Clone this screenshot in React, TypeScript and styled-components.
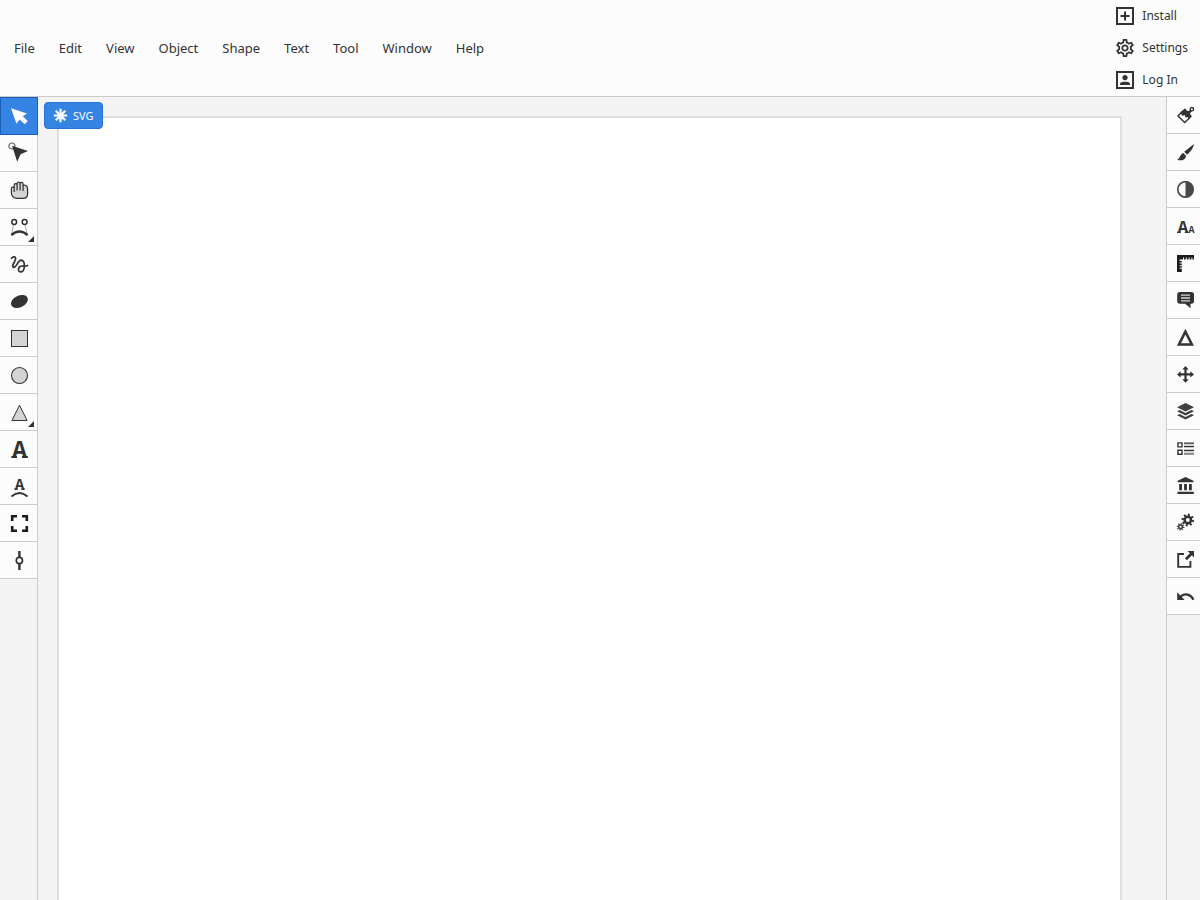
import React from "react";
import styled, { createGlobalStyle, css } from "styled-components";
import { MdOutlineSettings } from "react-icons/md";

const INK = "#333333";
const SHADE = "#d4d4d4";
const LINE = "#cccccc";
const PANEL = "#fcfcfc";
const ACCENT = "#3584e4";
const ACCENT_DARK = "#1b5fb4";

const GlobalStyle = createGlobalStyle`
  *, *::before, *::after { box-sizing: border-box; }
  body {
    margin: 0;
    background: #f4f4f4;
    color: ${INK};
    font-family: "Noto Sans", sans-serif;
    font-size: 13px;
    line-height: 18px;
  }
`;

const Shell = styled.div`
  display: flex;
  flex-direction: column;
  min-height: 100vh;
`;

const Header = styled.header`
  display: flex;
  align-items: center;
  justify-content: space-between;
  background: ${PANEL};
  border-bottom: 1px solid ${LINE};
`;

const MenuBar = styled.nav`
  display: flex;
  flex-wrap: wrap;
  padding-left: 2px;
`;

const MenuButton = styled.button`
  padding: 8px 12px;
  border: 0;
  background: none;
  color: inherit;
  font: inherit;
  cursor: pointer;
  &:hover { background: #ececec; }
`;

const AccountBar = styled.div`
  display: flex;
  flex-direction: column;
`;

const AccountButton = styled.button`
  display: flex;
  align-items: center;
  gap: 8px;
  height: 32px;
  padding: 0 12px;
  border: 0;
  background: none;
  color: inherit;
  font: inherit;
  font-size: 12px;
  cursor: pointer;
  &:hover { background: #ececec; }
`;

const Workspace = styled.main`
  display: flex;
  flex: 1;
`;

const Toolbar = styled.div<{ $side: "left" | "right" }>`
  flex: none;
  ${({ $side }) =>
    $side === "left"
      ? css`
          width: 38px;
          border-right: 1px solid ${LINE};
        `
      : css`
          width: 34px;
          border-left: 1px solid ${LINE};
        `}
`;

const ToolButton = styled.button<{ $active?: boolean }>`
  position: relative;
  display: flex;
  align-items: center;
  justify-content: center;
  width: 100%;
  height: 37px;
  padding: 0 0 0 1px;
  border: 0;
  border-bottom: 1px solid ${LINE};
  background: ${PANEL};
  color: ${INK};
  cursor: pointer;
  ${({ $active }) =>
    $active &&
    css`
      width: 38px;
      height: 38px;
      padding: 0;
      border: 1px solid ${ACCENT_DARK};
      background: ${ACCENT};
      color: #ffffff;
    `}
`;

const PanelButton = styled(ToolButton)`
  padding: 0 0 0 3px;
`;

const Flyout = styled.span`
  position: absolute;
  right: 3px;
  bottom: 3px;
  border-left: 6px solid transparent;
  border-bottom: 6px solid ${INK};
`;

const CanvasArea = styled.section`
  position: relative;
  display: flex;
  flex: 1;
  padding: 19px 44px 0 19px;
`;

const Artboard = styled.div`
  flex: 1;
  background: #ffffff;
  border: 2px solid #dfdfdf;
  border-bottom: 0;
`;

const FormatTab = styled.button`
  position: absolute;
  top: 5px;
  left: 6px;
  display: flex;
  align-items: center;
  gap: 5px;
  height: 27px;
  padding: 0 8px;
  border: 1px solid #2674d4;
  border-radius: 4px;
  background: ${ACCENT};
  color: #ffffff;
  font: inherit;
  font-size: 11px;
  cursor: pointer;
`;

const Icon = styled.svg.attrs({ viewBox: "0 0 18 18", "aria-hidden": true })<{ $size?: number }>`
  display: block;
  flex: none;
  width: ${({ $size = 18 }) => $size}px;
  height: ${({ $size = 18 }) => $size}px;
  overflow: visible;
  fill: currentColor;
`;

const GearIcon = styled(MdOutlineSettings)`
  display: block;
  flex: none;
  width: 18px;
  height: 18px;
`;

const Letter = styled.text<{ $size: number }>`
  font-family: "Liberation Mono", monospace;
  font-size: ${({ $size }) => $size}px;
  font-weight: 700;
  text-anchor: middle;
`;

const line = { fill: "none", stroke: "currentColor" } as const;

// Closed outline of a toothed wheel with a round hole.
function cog(cx: number, cy: number, outer: number, inner: number, hole: number, teeth: number) {
  const step = (Math.PI * 2) / teeth;
  const at = (r: number, a: number) =>
    `${(cx + r * Math.cos(a)).toFixed(2)} ${(cy + r * Math.sin(a)).toFixed(2)}`;
  let d = "";
  for (let i = 0; i < teeth; i++) {
    const a = i * step + 0.2;
    d += `${i ? "L" : "M"}${at(inner, a - step * 0.28)}L${at(outer, a - step * 0.2)}L${at(outer, a + step * 0.2)}L${at(inner, a + step * 0.28)}`;
  }
  return `${d}ZM${cx - hole} ${cy}a${hole} ${hole} 0 1 0 ${hole * 2} 0a${hole} ${hole} 0 1 0 ${-hole * 2} 0Z`;
}

type Tool = { label: string; art: React.ReactNode; active?: boolean; flyout?: boolean };

const tools: Tool[] = [
  {
    label: "Transform",
    active: true,
    art: <path d="M1 1.3 17 6.4 12.8 9.2 17.8 14 14.6 17.3 9.6 12.5 6.5 16.8Z" />,
  },
  {
    label: "Edit nodes",
    art: (
      <>
        <circle cx="1.9" cy="2" r="3" {...line} stroke="#666" strokeWidth="1.2" />
        <path d="M2 1.8 18 7 10.6 10.2 7.2 17.8Z" />
      </>
    ),
  },
  {
    label: "View",
    art: (
      <g stroke="currentColor" strokeWidth="1.2">
        <path
          fill={SHADE}
          d="M1.4 12V7.6a1.4 1.4 0 0 1 2.8 0V4a1.45 1.45 0 0 1 2.9 0V2.5a1.5 1.5 0 0 1 3 0V2.9a1.5 1.5 0 0 1 3 0V5a1.5 1.5 0 0 1 2.4-.6Q17.6 5.4 17.6 7.6V12.8Q17.6 17.4 13 17.4H6.8Q1.4 16.4 1.4 12Z"
        />
        <path fill="none" d="M4.2 7.6V11M7.1 4V9.6M10.1 3V9.6M13.1 4.6V10" />
      </g>
    ),
  },
  {
    label: "Pen",
    flyout: true,
    art: (
      <>
        <path d="M3.6 6 1.6 16M14.9 6 17.1 16" {...line} stroke="#999" strokeWidth="0.8" />
        <g {...line} strokeWidth="1.5">
          <circle cx="4.2" cy="4" r="2.4" />
          <circle cx="14.6" cy="4" r="2.4" />
          <path d="M1.3 17.2Q9.4 9.8 17.6 17.2" strokeWidth="2.3" />
        </g>
      </>
    ),
  },
  {
    label: "Freehand",
    art: (
      <path
        d="M1.5 3.4C3 .9 6.4 1.4 5.4 4.8 4.6 7.6 1.2 10.6 3.2 12.2 6.2 13.8 7.6 5.4 11 5.2 15.6 5.4 15.4 15.8 11.2 16.8 7.8 17.4 7.4 12.6 10.8 11.2 12.8 10.4 15 12.4 17.6 10.4"
        {...line}
        strokeWidth="1.7"
        strokeLinecap="round"
      />
    ),
  },
  {
    label: "Blob brush",
    art: <ellipse cx="9.4" cy="9.5" rx="9" ry="5.8" transform="rotate(-25 9.4 9.5)" />,
  },
  {
    label: "Rectangle",
    art: <rect x="1.5" y="1.5" width="16" height="16" fill={SHADE} stroke="currentColor" />,
  },
  {
    label: "Ellipse",
    art: <circle cx="9.5" cy="9.5" r="8" fill={SHADE} stroke="currentColor" strokeWidth="1.1" />,
  },
  {
    label: "Triangle",
    flyout: true,
    art: <path d="M9.5 2.2 17.1 17.5H1.9Z" fill={SHADE} stroke="currentColor" />,
  },
  {
    label: "Text",
    art: (
      <>
        <Letter x="9.5" y="18" $size={25}>
          A
        </Letter>
        <path d="M1.4 17H7M12 17H17.8" {...line} strokeWidth="2" />
      </>
    ),
  },
  {
    label: "Text on path",
    art: (
      <>
        <Letter x="9.5" y="12.6" $size={16}>
          A
        </Letter>
        <path d="M4 12H8M11 12H15" {...line} strokeWidth="1.2" />
        <path d="M1.5 19.4Q9.5 12.6 17.5 19.4" {...line} strokeWidth="2" />
      </>
    ),
  },
  {
    label: "Artboard",
    art: (
      <path
        d="M2.2 7V2.2H7M12 2.2H16.8V7M16.8 12V16.8H12M7 16.8H2.2V12"
        {...line}
        stroke="#1c1c1c"
        strokeWidth="2.6"
      />
    ),
  },
  {
    label: "Gradient",
    art: (
      <g {...line}>
        <circle cx="9.4" cy="9.4" r="3.1" strokeWidth="1.7" />
        <path d="M9.4 0V6.4M9.4 12.4V19" strokeWidth="2.4" />
      </g>
    ),
  },
];

const panels: Tool[] = [
  {
    label: "Fill",
    art: (
      <>
        <path d="M6.2 5.6 2 10 8.7 16.6 13.6 11.8Z" fill="#fff" stroke="currentColor" strokeWidth="1.4" />
        <path d="M5.4 5.4 9 2.2 11 4.8 13 5 14.6 3.2 16.2 5 14.2 7 14.4 8.4 16 10.2 12.6 13.4 11.6 10.8 9.6 11.8 8.6 9 6.6 10 4.6 7.2Z" />
        <circle cx="15.9" cy="3.2" r="1.7" {...line} strokeWidth="1.4" />
      </>
    ),
  },
  {
    label: "Stroke",
    art: (
      <path d="M18 .9 8.2 8.8 11 11.8C14.4 8.8 17.2 5.4 18 .9ZM7.3 9.9 10.2 12.9C9.6 16.4 6 18.4 1 16.8 4.2 15.8 3.6 11 7.3 9.9Z" />
    ),
  },
  {
    label: "Opacity",
    art: (
      <g color="#484848">
        <circle cx="9.5" cy="9.4" r="7.7" {...line} strokeWidth="1.7" />
        <path d="M9.5 1.4a8 8 0 0 1 0 16Z" fill="#484848" />
      </g>
    ),
  },
  {
    label: "Character",
    art: (
      <>
        <Letter x="6.8" y="16" $size={18}>
          A
        </Letter>
        <path d="M1 15.4H4.6M8.8 15.4H12.6" {...line} strokeWidth="1.2" />
        <Letter x="15.4" y="16" $size={10}>
          A
        </Letter>
      </>
    ),
  },
  {
    label: "Measurements",
    art: (
      <path
        fill="#1c1c1c"
        d="M1 1H18V5.4H16.4V3.4H15.4V5.4H13.6V3.4H12.6V5.4H10.8V3.4H9.8V5.4H8V3.4H7V5.4H3.6V7H5.8V8.6H3.6V9.6H5.8V11.2H3.6V12.2H5.8V13.8H3.6V14.8H5.8V18H1Z"
      />
    ),
  },
  {
    label: "Comments",
    art: (
      <>
        <path d="M4 1H15.4Q18 1 18 3.6V10Q18 12.8 15.4 12.8H14.4L14.7 17.2 9 12.8H4Q1.2 12.8 1.2 10V3.6Q1.2 1 4 1Z" />
        <path d="M5 4.2H14M5 7H14M5 9.8H14" {...line} stroke="#d8d8d8" strokeWidth="1.3" />
      </>
    ),
  },
  {
    label: "Shape",
    art: <path d="M9.4 3.6 15.9 16.6H2.9Z" {...line} strokeWidth="2.5" />,
  },
  {
    label: "Transform panel",
    art: (
      <path d="M9.5 1 12.7 4.6H10.6V8.3H14.3V6.2L18 9.4 14.3 12.6V10.5H10.6V14.2H12.7L9.5 17.8 6.3 14.2H8.4V10.5H4.7V12.6L1 9.4 4.7 6.2V8.3H8.4V4.6H6.3Z" />
    ),
  },
  {
    label: "Layers",
    art: (
      <g fill="#404040">
        <path d="M9.5 1 18 5.3 9.5 9.6 1 5.3Z" />
        <path d="M1 9.2 3.6 7.9 9.5 11 15.4 7.9 18 9.2 9.5 13.6Z" />
        <path d="M1 13.2 3.6 11.9 9.5 15 15.4 11.9 18 13.2 9.5 17.6Z" />
      </g>
    ),
  },
  {
    label: "Objects",
    art: (
      <>
        <path d="M8 5.9H18M8 13.2H18" {...line} stroke={SHADE} strokeWidth="2.4" />
        <g {...line} strokeWidth="1.4">
          <path d="M1.9 3.9H6V7.9H1.9ZM1.9 11.2H6V15.2H1.9Z" />
          <path d="M8 4.1H18M8 7.7H18M8 11.4H18M8 15H18" strokeWidth="1.2" />
        </g>
      </>
    ),
  },
  {
    label: "Library",
    art: (
      <path d="M9.5 1 17.4 4.8V6.2H1.6V4.8ZM3.2 8H6V14.2H3.2ZM8.1 8H10.9V14.2H8.1ZM13 8H15.8V14.2H13ZM1.4 15.8H17.8V18H1.4Z" />
    ),
  },
  {
    label: "Preferences",
    art: (
      <>
        <path fillRule="evenodd" d={cog(11.8, 7, 6.4, 4.5, 1.9, 8)} />
        <path fillRule="evenodd" d={cog(4.6, 13.8, 3.9, 2.5, 1.1, 8)} />
      </>
    ),
  },
  {
    label: "Export",
    art: (
      <>
        <path d="M8 4H2.2V16.9H14.4V11" {...line} strokeWidth="1.9" />
        <path d="M11.6 1H18V7.4L15.9 5.3 10.8 10.2 8.9 8.3 13.9 3.3Z" />
      </>
    ),
  },
  {
    label: "History",
    art: (
      <>
        <path d="M1.2 5.2V13H8.6Z" />
        <path d="M4.4 9.8C8.6 5.2 15.2 7.6 17.4 12.8" {...line} strokeWidth="2.2" />
      </>
    ),
  },
];

const menus = ["File", "Edit", "View", "Object", "Shape", "Text", "Tool", "Window", "Help"];

export default function App() {
  return (
    <Shell>
      <GlobalStyle />
      <Header>
        <MenuBar aria-label="Main menu">
          {menus.map((name) => (
            <MenuButton key={name} type="button">
              {name}
            </MenuButton>
          ))}
        </MenuBar>
        <AccountBar>
          <AccountButton type="button">
            <Icon>
              <path d="M1 1H17V17H1Z" {...line} strokeWidth="2" />
              <path d="M9 4.5V13.5M4.5 9H13.5" {...line} strokeWidth="2" />
            </Icon>
            Install
          </AccountButton>
          <AccountButton type="button">
            <GearIcon viewBox="2 2 20 20" aria-hidden />
            Settings
          </AccountButton>
          <AccountButton type="button">
            <Icon>
              <path d="M1 1H17V17H1Z" {...line} strokeWidth="2" />
              <circle cx="9" cy="6.6" r="2.6" />
              <path d="M4 14V12.8C4 10.2 14 10.2 14 12.8V14Z" />
            </Icon>
            Log In
          </AccountButton>
        </AccountBar>
      </Header>
      <Workspace>
        <Toolbar $side="left" role="toolbar" aria-label="Tools">
          {tools.map((tool) => (
            <ToolButton key={tool.label} type="button" aria-label={tool.label} $active={tool.active}>
              <Icon>{tool.art}</Icon>
              {tool.flyout && <Flyout />}
            </ToolButton>
          ))}
        </Toolbar>
        <CanvasArea aria-label="Canvas">
          <Artboard />
          <FormatTab type="button">
            <Icon $size={15}>
              <path
                d="M9 1V7M9 11V17M1 9H7M11 9H17M3.3 3.3 7.4 7.4M10.6 10.6 14.7 14.7M14.7 3.3 10.6 7.4M7.4 10.6 3.3 14.7"
                {...line}
                strokeWidth="2.6"
              />
              <circle cx="9" cy="9" r="2.2" />
            </Icon>
            SVG
          </FormatTab>
        </CanvasArea>
        <Toolbar $side="right" role="toolbar" aria-label="Panels">
          {panels.map((panel) => (
            <PanelButton key={panel.label} type="button" aria-label={panel.label}>
              <Icon>{panel.art}</Icon>
            </PanelButton>
          ))}
        </Toolbar>
      </Workspace>
    </Shell>
  );
}
